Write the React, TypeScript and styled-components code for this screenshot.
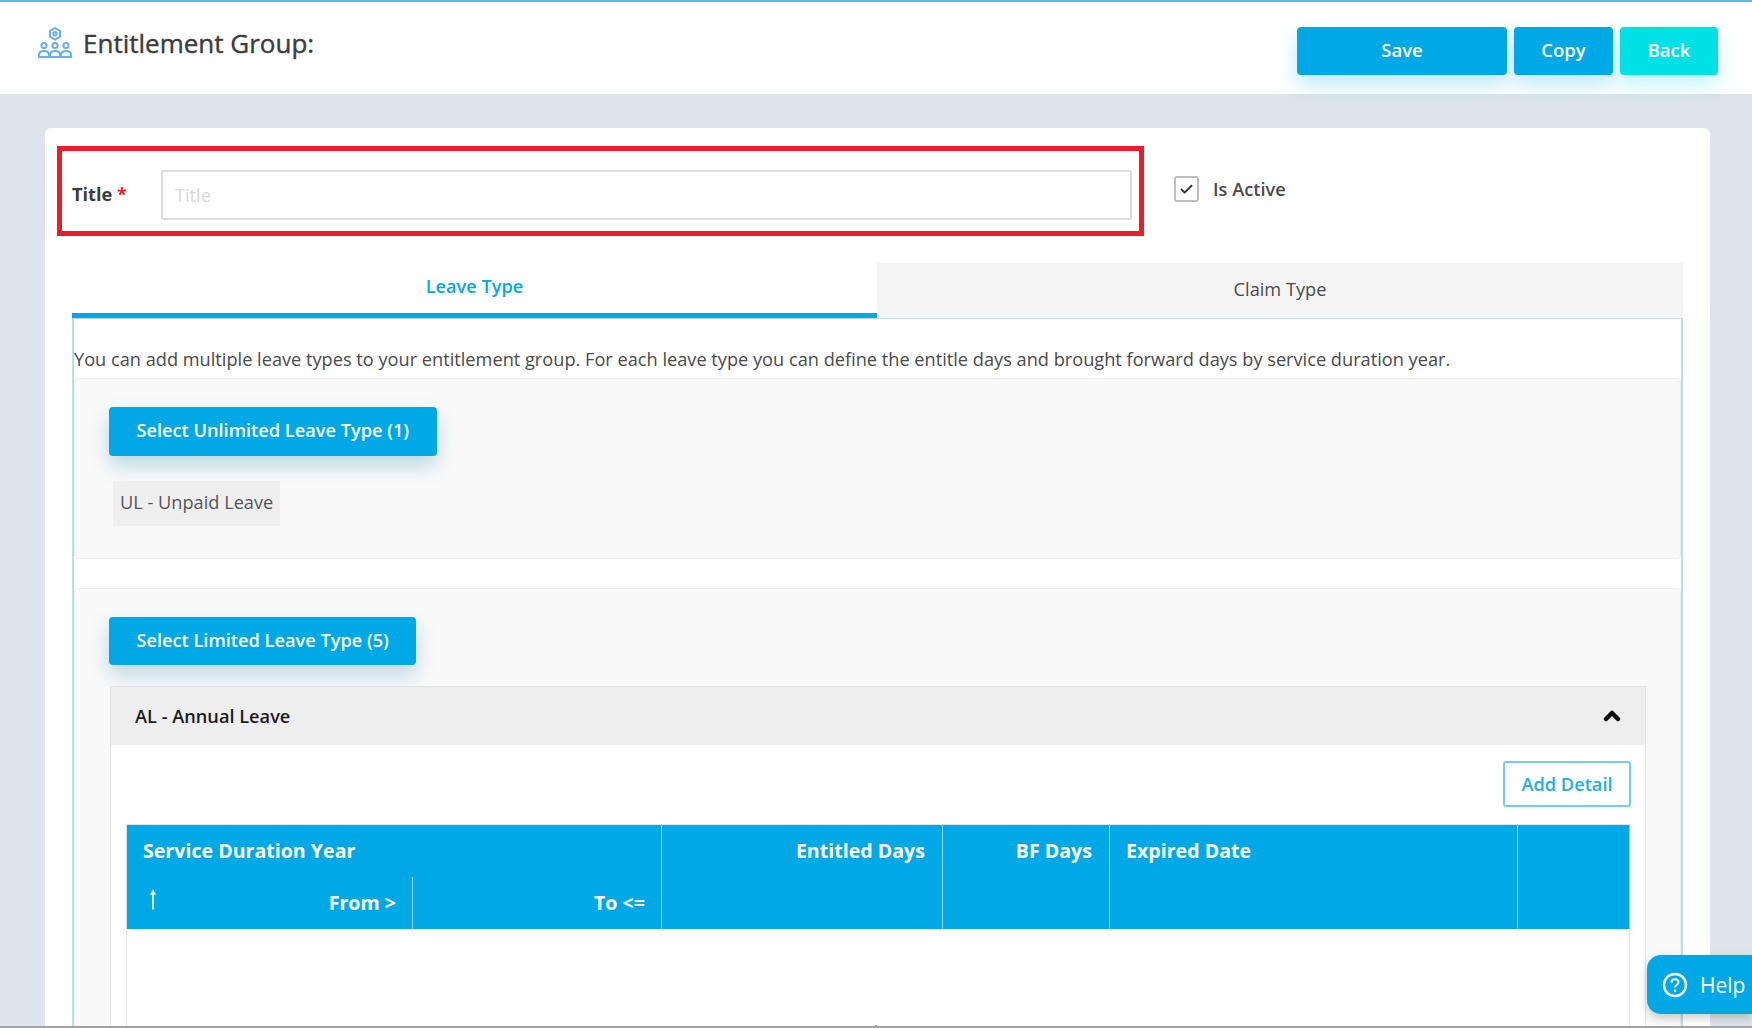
import React from 'react';
import styled, {createGlobalStyle} from 'styled-components';
import {ChevronUp, Check} from 'lucide-react';

const Blue = '#00a9e6';

const GlobalStyle = createGlobalStyle`
  html, body {
    margin: 0;
    padding: 0;
    height: 100%;
    overflow: hidden;
    background: #dde4ec;
    font-family: 'Open Sans', 'Noto Sans', sans-serif;
    color: #4a4a4a;
  }
  * {
    box-sizing: border-box;
  }
`;

const GroupIcon = () => (
  <IconFrame width="34" height="31" viewBox="0 0 34 31" fill="none" stroke="#69aeef" strokeWidth="2">
    <path d="M17 1l5 2.900v5.800l-5 2.900-5-2.900V3.900z" />
    <circle cx="17" cy="6.800" r="1.700" />
    <circle cx="6" cy="18.500" r="2.600" />
    <circle cx="17" cy="18.500" r="2.600" />
    <circle cx="28" cy="18.500" r="2.600" />
    <path d="M1 30v-2c0-2.600 2-4 5-4s5 1.400 5 4v2z" />
    <path d="M12 30v-2c0-2.600 2-4 5-4s5 1.400 5 4v2z" />
    <path d="M23 30v-2c0-2.600 2-4 5-4s5 1.400 5 4v2z" />
  </IconFrame>
);

const HelpIcon = () => (
  <svg width="26" height="26" viewBox="0 0 26 26" fill="none" stroke="#fff" strokeWidth="2.4">
    <circle cx="13" cy="13" r="11" />
    <path d="M9.500 10.500c0-2 1.500-3.300 3.500-3.300s3.500 1.300 3.500 3.100c0 2.700-3.500 2.700-3.500 5.200" strokeWidth="2" />
    <circle cx="13" cy="18.800" r="0.600" strokeWidth="1.400" />
  </svg>
);

const UpArrow = () => (
  <svg width="10" height="21" viewBox="0 0 10 21" fill="#fff" stroke="#fff">
    <path d="M5 20.500V4" strokeWidth="1.700" />
    <path d="M5 1L2.200 5.500h5.600z" strokeWidth="0.500" />
  </svg>
);

const App: React.FC = () => (
  <>
    <GlobalStyle />
    <Page>
      <Header>
        <HeaderTitle>
          <GroupIcon />
          <Heading>Entitlement Group:</Heading>
        </HeaderTitle>
        <HeaderActions>
          <ActionButton $width={210}>Save</ActionButton>
          <ActionButton $width={99}>Copy</ActionButton>
          <ActionButton $width={98} $variant="cyan">
            Back
          </ActionButton>
        </HeaderActions>
      </Header>
      <Content>
        <Card>
          <FormRow>
            <Highlight>
              <FieldLabel>
                Title <Required>*</Required>
              </FieldLabel>
              <TitleInput placeholder="Title" readOnly />
            </Highlight>
            <ActiveToggle>
              <CheckBox>
                <Check size={15} strokeWidth={3} color="#333" />
              </CheckBox>
              Is Active
            </ActiveToggle>
          </FormRow>
          <TabsSection>
            <Tabs>
              <Tab $active>Leave Type</Tab>
              <Tab>Claim Type</Tab>
            </Tabs>
            <TabPanel>
              <Description>
                You can add multiple leave types to your entitlement group. For each leave type you can define the
                entitle days and brought forward days by service duration year.
              </Description>
              <UnlimitedPanel>
                <SelectButton $height={49}>Select Unlimited Leave Type (1)</SelectButton>
                <Chip>UL - Unpaid Leave</Chip>
              </UnlimitedPanel>
              <LimitedPanel>
                <SelectButton $height={48}>Select Limited Leave Type (5)</SelectButton>
                <Accordion>
                  <AccordionHeader>
                    AL - Annual Leave
                    <ChevronUp size={24} strokeWidth={4.5} color="#111" />
                  </AccordionHeader>
                  <AccordionBody>
                    <AddRow>
                      <AddButton>Add Detail</AddButton>
                    </AddRow>
                    <DetailTable>
                      <colgroup>
                        <col width={286} />
                        <col width={249} />
                        <col width={281} />
                        <col width={167} />
                        <col width={408} />
                        <col width={112} />
                      </colgroup>
                      <thead>
                        <tr>
                          <HeadCell colSpan={2}>Service Duration Year</HeadCell>
                          <HeadCell rowSpan={2} $align="right">
                            Entitled Days
                          </HeadCell>
                          <HeadCell rowSpan={2} $align="right">
                            BF Days
                          </HeadCell>
                          <HeadCell rowSpan={2}>Expired Date</HeadCell>
                          <HeadCell rowSpan={2} />
                        </tr>
                        <tr>
                          <SubCell>
                            <SortArrow>
                              <UpArrow />
                            </SortArrow>
                            From &gt;
                          </SubCell>
                          <SubCell>To &lt;=</SubCell>
                        </tr>
                      </thead>
                      <tbody>
                        <tr>
                          <EmptyCell colSpan={6}>No data</EmptyCell>
                        </tr>
                      </tbody>
                    </DetailTable>
                  </AccordionBody>
                </Accordion>
              </LimitedPanel>
            </TabPanel>
          </TabsSection>
        </Card>
        <HelpTab>
          <HelpIcon />
          Help
        </HelpTab>
      </Content>
      <BottomEdge />
    </Page>
  </>
);

export default App;

// Styled Components

const Page = styled.div`
  display: flex;
  flex-direction: column;
  width: 1752px;
  height: 1028px;
  overflow: hidden;
  background: #dde4ec;
`;

const Header = styled.header`
  position: relative;
  z-index: 1;
  flex: none;
  display: flex;
  justify-content: space-between;
  align-items: flex-start;
  height: 94px;
  padding: 25px 34px 0 38px;
  background: #fff;
  border-top: 2px solid #52bcec;
`;

const HeaderTitle = styled.div`
  display: flex;
  align-items: center;
  gap: 11px;
  height: 34px;
`;

const IconFrame = styled.svg`
  flex: none;
  margin-top: -3px;
`;

const Heading = styled.h1`
  margin: -2px 0 0;
  font-size: 26px;
  font-weight: 400;
  color: #3c3c3c;
  -webkit-text-stroke: 0.4px #3c3c3c;
`;

const HeaderActions = styled.div`
  display: flex;
  gap: 7px;
`;

const ActionButton = styled.button<{$width: number; $variant?: 'cyan'}>`
  width: ${props => props.$width}px;
  height: 48px;
  padding: 0 0 4px;
  border: none;
  border-radius: 4px;
  font-family: inherit;
  font-size: 18.5px;
  font-weight: 600;
  color: #fff;
  background: ${props => (props.$variant === 'cyan' ? '#00e1e6' : Blue)};
  box-shadow: 0 10px 20px ${props => (props.$variant === 'cyan' ? 'rgba(0, 225, 230, 0.25)' : 'rgba(0, 169, 230, 0.25)')};
`;

const Content = styled.main`
  position: relative;
  flex: 1;
  min-height: 0;
  overflow: hidden;
  padding: 34px 42px 0 45px;
`;

const Card = styled.section`
  height: 1200px;
  padding: 18px 27px 0 12px;
  background: #fff;
  border-radius: 6px 6px 0 0;
`;

const FormRow = styled.div`
  display: flex;
  align-items: flex-start;
`;

const Highlight = styled.div`
  display: flex;
  align-items: center;
  width: 1087px;
  height: 90px;
  padding: 6px 7px 0 10px;
  border: 5px solid #ed1c2b;
`;

const FieldLabel = styled.label`
  flex: none;
  width: 89px;
  font-size: 18.2px;
  font-weight: 700;
  color: #3c3c3c;
`;

const Required = styled.span`
  color: #f01c24;
`;

const TitleInput = styled.input`
  flex: 1;
  height: 50px;
  margin-top: 2px;
  padding: 0 12px;
  border: 2px solid #dcdcdc;
  border-radius: 2px;
  font-family: inherit;
  font-size: 18.2px;
  outline: none;

  &::placeholder {
    color: #d8d8d8;
  }
`;

const ActiveToggle = styled.div`
  display: flex;
  align-items: center;
  gap: 14px;
  margin: 30px 0 0 30px;
  font-size: 18.2px;
  font-weight: 600;
  color: #4a4a4a;
`;

const CheckBox = styled.span`
  display: flex;
  align-items: center;
  justify-content: center;
  width: 25px;
  height: 26px;
  border: 2px solid #bdbdbd;
  border-radius: 3px;
`;

const TabsSection = styled.div`
  margin: 27px 0 0 15px;
`;

const Tabs = styled.div`
  display: grid;
  grid-template-columns: 805px 1fr;
  height: 55px;
`;

const Tab = styled.div<{$active?: boolean}>`
  display: flex;
  align-items: center;
  justify-content: center;
  font-size: 18.2px;
  font-weight: ${props => (props.$active ? 600 : 400)};
  color: ${props => (props.$active ? Blue : '#4a4a4a')};
  background: ${props => (props.$active ? '#fff' : '#f5f5f5')};
  border-bottom: ${props => (props.$active ? `5px solid ${Blue}` : 'none')};
  padding-bottom: 4px;
`;

const TabPanel = styled.div`
  border: 2px solid #bcdcf5;
  border-bottom: none;
  border-top-width: 1px;
`;

const Description = styled.p`
  margin: 0;
  padding: 28px 0 7px 0;
  font-size: 18.2px;
  line-height: 24px;
  color: #4a4a4a;
`;

const PanelBox = styled.div`
  background: #f9f9f9;
  border: 1px solid #eeeeee;
  border-radius: 4px;
  padding: 28px 34px 34px 34px;
`;

const UnlimitedPanel = styled(PanelBox)`
  height: 181px;
`;

const LimitedPanel = styled(PanelBox)`
  margin-top: 29px;
`;

const SelectButton = styled.button<{$height: number}>`
  display: block;
  height: ${props => props.$height}px;
  padding: 0 27.5px 3px;
  border: none;
  border-radius: 4px;
  font-family: inherit;
  font-size: 18.2px;
  font-weight: 600;
  color: #fff;
  background: ${Blue};
  box-shadow: 0 10px 20px rgba(0, 120, 170, 0.25);
`;

const Chip = styled.div`
  display: inline-flex;
  align-items: center;
  height: 45px;
  margin: 25px 0 0 4px;
  padding: 0 7px 4px;
  font-size: 18.2px;
  background: #efefef;
  color: #555;
`;

const Accordion = styled.div`
  margin: 21px 0 0 1px;
  background: #fff;
  border: 1px solid #e2e2e2;
`;

const AccordionHeader = styled.div`
  display: flex;
  align-items: center;
  justify-content: space-between;
  height: 58px;
  padding: 0 21px 0 24px;
  background: #eeeeee;
  font-size: 18.2px;
  font-weight: 600;
  color: #1c1c1c;
`;

const AccordionBody = styled.div`
  padding: 16px 14px 0 15px;
`;

const AddRow = styled.div`
  display: flex;
  justify-content: flex-end;
  margin-bottom: 17px;
`;

const AddButton = styled.button`
  width: 128px;
  height: 46px;
  padding: 0;
  border: 2px solid #6fcdf2;
  border-radius: 3px;
  background: #fff;
  font-family: inherit;
  font-size: 18.2px;
  font-weight: 600;
  color: #22ade6;
`;

const DetailTable = styled.table`
  width: 1503px;
  table-layout: fixed;
  border-collapse: collapse;
  border: 1px solid #e4e4e4;
`;

const HeadCell = styled.th<{$align?: 'right'}>`
  height: 52px;
  padding: 12px 17px 0 16px;
  vertical-align: top;
  text-align: ${props => props.$align || 'left'};
  font-size: 19.6px;
  font-weight: 700;
  color: #fff;
  background: ${Blue};
  border-right: 1px solid #8fd6f2;
`;

const SubCell = styled.th`
  position: relative;
  height: 52px;
  padding: 0 16px;
  text-align: right;
  font-size: 19.6px;
  font-weight: 700;
  color: #fff;
  background: ${Blue};
  border-right: 1px solid #8fd6f2;
`;

const SortArrow = styled.span`
  position: absolute;
  left: 21px;
  top: 12px;
  line-height: 0;
`;

const EmptyCell = styled.td`
  height: 200px;
  padding: 90px 14px 0 0;
  text-align: center;
  vertical-align: top;
  font-size: 20px;
  color: #888;
`;

const HelpTab = styled.div`
  position: absolute;
  right: 0;
  top: 861px;
  display: flex;
  align-items: center;
  gap: 12px;
  width: 105px;
  height: 59px;
  padding-left: 15px;
  border-radius: 14px 0 0 14px;
  background: ${Blue};
  color: #fff;
  font-size: 21px;
  box-shadow: 0 4px 10px rgba(0, 0, 0, 0.2);
`;

const BottomEdge = styled.div`
  flex: none;
  height: 2px;
  background: #a3a3a3;
`;
